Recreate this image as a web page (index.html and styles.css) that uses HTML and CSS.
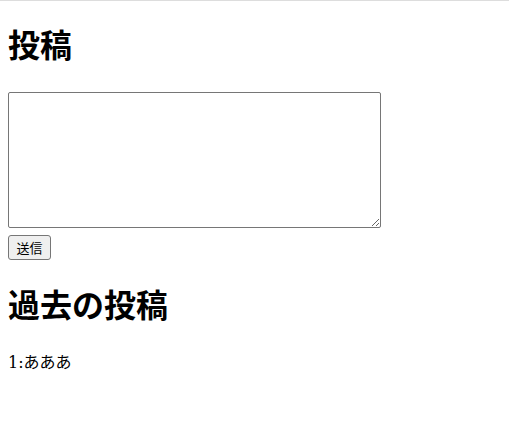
FILE: index.html
```html
<!DOCTYPE html>
<html lang="ja">
<head>
    <meta charset="UTF-8">
    <meta name="viewport" content="width=device-width, initial-scale=1.0">
    <title>投稿</title>
    <link rel="stylesheet" href="styles.css">
</head>
<body>
    <h1>投稿</h1>
    <form class="post-form">
        <textarea class="post-text" name="text"></textarea>
        <button type="button" class="send">送信</button>
    </form>

    <h1 class="past">過去の投稿</h1>
    <div class="posts">
        <p>1:あああ</p>
    </div>
</body>
</html>
```

FILE: styles.css
```css
html {
    border-top: 1px solid #dddddd;
}

body {
    margin: 0;
    padding: 0 8px;
    font-family: "DejaVu Serif", "Noto Sans CJK JP", serif;
    font-size: 16px;
    color: #000;
}

h1 {
    font-family: "Noto Sans CJK JP", sans-serif;
    font-size: 32px;
    font-weight: bold;
    margin: 18px 0 25px;
    line-height: 48px;
}

h1.past {
    margin-top: 19px;
}

.post-form {
    display: flex;
    flex-direction: column;
    align-items: flex-start;
    gap: 7px;
}

.post-text {
    width: 373px;
    height: 136px;
    box-sizing: border-box;
    border: 1px solid #767676;
    border-radius: 2px;
    margin: 0;
}

.send {
    width: 43px;
    height: 25px;
    padding: 0;
    font-family: "Noto Sans CJK JP", sans-serif;
    font-size: 13px;
    background: #efefef;
    border: 1px solid #767676;
    border-radius: 3px;
    color: #000;
}

.posts p {
    margin: 0;
    line-height: 21px;
}
```
